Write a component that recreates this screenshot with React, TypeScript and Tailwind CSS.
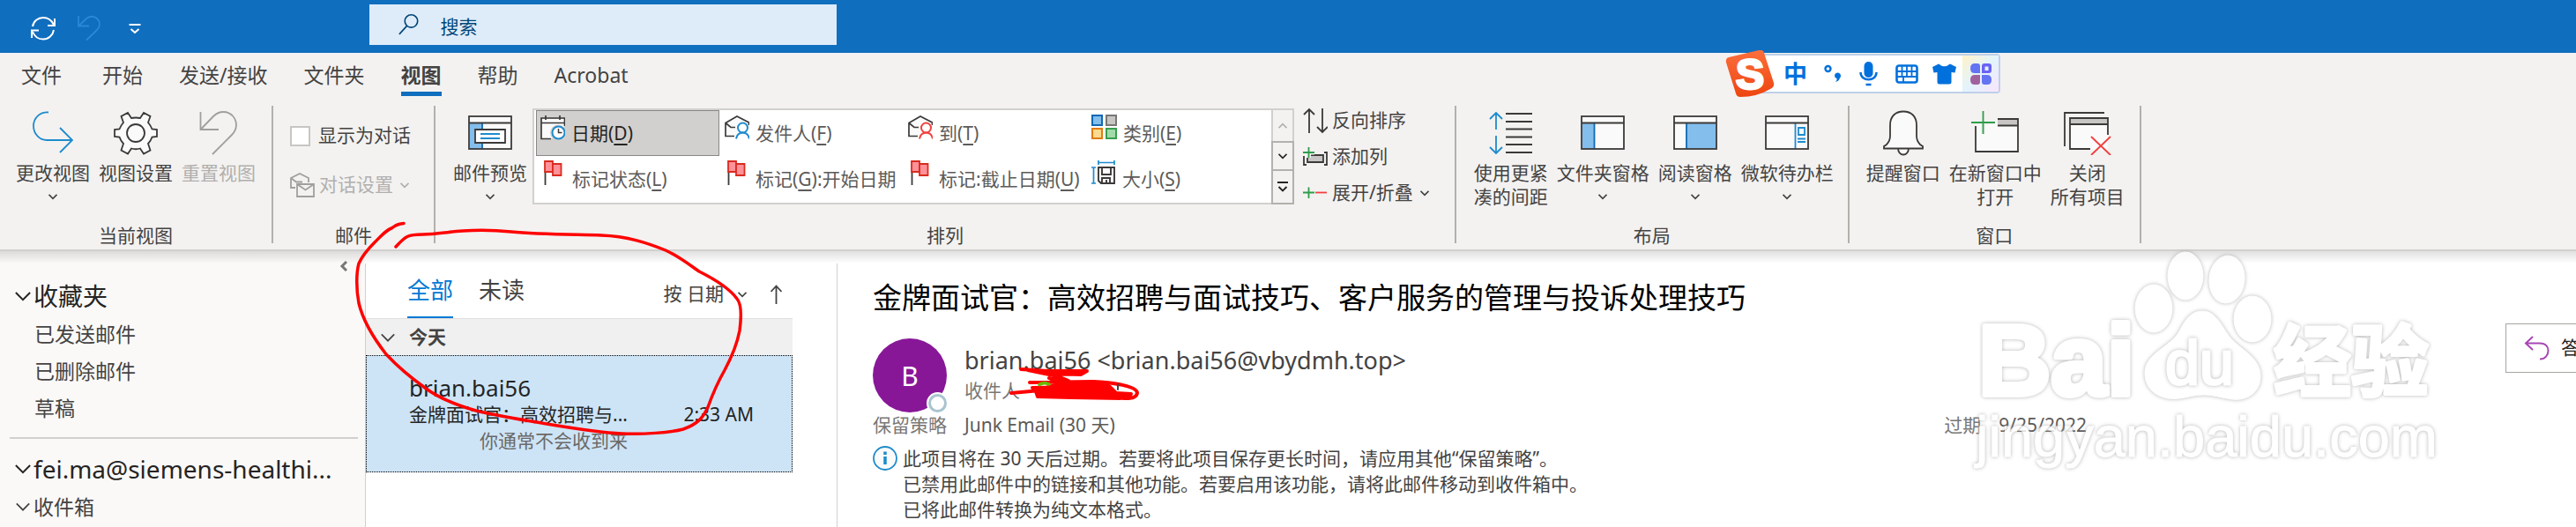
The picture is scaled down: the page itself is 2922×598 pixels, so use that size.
import { ReactNode, useState } from 'react'

const INK = '#3b3a39'
const BLUE = '#1e8bcd'

const TABS = ['文件', '开始', '发送/接收', '文件夹', '视图', '帮助', 'Acrobat']
const FAVORITES = ['已发送邮件', '已删除邮件', '草稿']

function Chevron({ size = 10, className = '' }: { size?: number; className?: string }) {
  return (
    <svg width={size} height={size} viewBox="0 0 10 10" fill="none" stroke="currentColor" className={`shrink-0 ${className}`}>
      <path d="M0.5 2.8 L5 7.3 L9.5 2.8" strokeWidth={size > 12 ? 1.1 : 1.7} />
    </svg>
  )
}

function WindowIcon({ children }: { children?: ReactNode }) {
  return (
    <svg width="50" height="40" viewBox="0 0 50 40" fill="none">
      <rect x="1" y="1" width="48" height="37" fill="#fafafa" />
      {children}
      <rect x="1" y="1" width="48" height="37" stroke={INK} strokeWidth="1.8" />
      <path d="M1 8.5 H49" stroke={INK} strokeWidth="1.8" />
    </svg>
  )
}

function FlagIcon() {
  return (
    <svg width="28" height="28" viewBox="0 0 28 28" fill="none">
      <path d="M4.5 13 V28" stroke={INK} strokeWidth="1.8" />
      <path d="M4 1 H13 V13 H4 Z" fill="#ff9198" stroke="#d92b20" strokeWidth="1.8" />
      <path d="M13 4 H22.5 V17 H13 Z" fill="#ff9198" stroke="#d92b20" strokeWidth="1.8" />
    </svg>
  )
}

function PersonMailIcon({ color }: { color: string }) {
  return (
    <svg width="28" height="28" viewBox="0 0 28 28" fill="none">
      <path d="M1 9 L14 2 L27 9 V24 H1 Z" fill="#fafafa" />
      <path d="M11 24.500 H1 V9.500 L14 2 L27.500 9 V12 M1 9.500 L7 14.500 H12" stroke={INK} strokeWidth="1.7" />
      <circle cx="20.500" cy="15" r="5.500" stroke={color} strokeWidth="2" fill="#fff" />
      <path d="M13 27.500 C14 22.500 17 20.500 20.500 20.500 S27 22.500 28 27.500" stroke={color} strokeWidth="2" />
    </svg>
  )
}

const GALLERY: { label: string; hotkey?: string; tail?: string; icon: ReactNode }[] = [
  {
    label: '日期', hotkey: 'D', icon: (
      <svg width="28" height="28" viewBox="0 0 28 28" fill="none">
        <path d="M1 4 H27 V26 H1 Z" fill="#fafafa" />
        <path d="M12 26.500 H1 V3 H27.500 V12 M1 8.500 H27.500 M6 0 V5 M22 0 V5" stroke={INK} strokeWidth="1.7" />
        <circle cx="20" cy="19.500" r="9" fill="#d2d0ce" />
        <circle cx="20.500" cy="19.500" r="7" fill="#fff" stroke={BLUE} strokeWidth="2" />
        <path d="M20.500 15 V19.500 H24.500" stroke={INK} strokeWidth="1.5" />
      </svg>
    ),
  },
  { label: '发件人', hotkey: 'F', icon: <PersonMailIcon color={BLUE} /> },
  { label: '到', hotkey: 'T', icon: <PersonMailIcon color="#f2403f" /> },
  {
    label: '类别', hotkey: 'E', icon: (
      <svg width="29" height="28" viewBox="0 0 29 28" strokeWidth="2">
        <rect x="1" y="1" width="11" height="11" fill="#83beec" stroke="#1068b4" />
        <rect x="17" y="1" width="11" height="11" fill="#c8c6c4" stroke="#797775" />
        <rect x="1" y="16" width="11" height="11" fill="#f9da8f" stroke="#e07b12" />
        <rect x="17" y="16" width="11" height="11" fill="#a1dba9" stroke="#379e4e" />
      </svg>
    ),
  },
  { label: '标记状态', hotkey: 'L', icon: <FlagIcon /> },
  { label: '标记', hotkey: 'G', tail: ':开始日期', icon: <FlagIcon /> },
  { label: '标记:截止日期', hotkey: 'U', icon: <FlagIcon /> },
  {
    label: '大小', hotkey: 'S', icon: (
      <svg width="28" height="28" viewBox="0 0 28 28" fill="none">
        <path d="M8 2.500 H26 M8 0 V5 M26 0 V5 M2.500 8 V26 M0 8 H5 M0 26 H5" stroke={BLUE} strokeWidth="1.7" />
        <path d="M8 8 H26 V26 H11 L8 23 Z M12 8 V16 H22 V8 M12 26 V20 H21 V26 M17 22 V25" stroke={INK} strokeWidth="1.9" />
      </svg>
    ),
  },
]

function RibbonGroup({ label, className, children }: { label: string; className: string; children: ReactNode }) {
  return (
    <section aria-label={label} className="flex h-[156px] shrink-0 flex-col justify-between border-r-2 border-[#b3b0ad]">
      <div className={`flex ${className}`}>{children}</div>
      <h2 className="text-center text-[21px] leading-[18px]">{label}</h2>
    </section>
  )
}

function BigButton({ lines, icon, menu, disabled }: { lines: string[]; icon: ReactNode; menu?: boolean; disabled?: boolean }) {
  return (
    <button type="button" disabled={disabled} className="flex flex-col items-center pt-[6px] text-[21px] leading-[27px] disabled:text-[#b1afad]">
      <span className="mb-[7px] flex h-[50px] items-center">{icon}</span>
      {lines.map((line) => <span key={line} className="whitespace-nowrap">{line}</span>)}
      {menu && <Chevron className="mt-2" />}
    </button>
  )
}

function TitleBar() {
  return (
    <header className="flex h-[60px] items-start bg-[#106ebe]">
      <div className="flex w-[419px] shrink-0 pt-[17px] pl-[34px]">
        <button type="button" aria-label="发送/接收所有文件夹" className="text-white">
          <svg width="30" height="30" viewBox="0 0 30 30" fill="none" stroke="currentColor" strokeWidth="2">
            <path d="M3 13 C4 7 9 3 15 3 C20.500 3 24.500 6 27 11 M28 4 V12 H20 M27 17 C26 23 21 27.500 15 27.500 C9.500 27.500 5 24 3 19 M2 26 V17.500 H10" />
          </svg>
        </button>
        <button type="button" aria-label="撤消" disabled className="ml-[23px] text-[#2b88d8]">
          <svg width="28" height="30" viewBox="0 0 28 30" fill="none" stroke="currentColor" strokeWidth="1.8">
            <path d="M2 1 V12.500 H14 M2 12.500 L11 4 C15 1 20 1 23 4 C27 8 27 13 23 17 L11 28.500" />
          </svg>
        </button>
        <button type="button" aria-label="自定义快速访问工具栏" className="ml-[31px] text-white">
          <svg width="14" height="26" viewBox="0 0 14 26" fill="none" stroke="currentColor" strokeWidth="2">
            <path d="M0.500 9 H13.500 M2.500 14 L7 18 L11.500 14" />
          </svg>
        </button>
      </div>
      <label className="mt-[5px] flex h-[46px] w-[530px] items-center bg-[#deecf9] pl-[33px] text-[#004578]">
        <svg width="26" height="28" viewBox="0 0 26 28" fill="none" stroke="currentColor" strokeWidth="1.8">
          <circle cx="16" cy="9.500" r="8" />
          <path d="M10.500 15.500 L1 26" />
        </svg>
        <input aria-label="搜索" placeholder="搜索" className="ml-6 w-full bg-transparent pt-[3px] text-[21px] leading-[28px] outline-none placeholder:text-[#004578]" />
      </label>
    </header>
  )
}

function Ribbon() {
  const [threaded, setThreaded] = useState(false)

  return (
    <div className="border-b-2 border-[#d2d0ce] bg-[#f3f2f1] pb-[7px] text-[#444342]">
      <nav className="mb-[11px] flex h-[49px] gap-[41px] pl-6 text-[23px]">
        {TABS.map((tab) => (
          <button
            key={tab}
            type="button"
            className={tab === '视图'
              ? 'border-b-[5px] border-[#106ebe] pt-[6px] leading-[38px] font-bold whitespace-nowrap'
              : 'pb-[5px] pt-[6px] leading-[38px] whitespace-nowrap first:mr-[5px]'}
          >
            {tab}
          </button>
        ))}
      </nav>

      <div className="flex">
        <RibbonGroup label="当前视图" className="gap-[10px] px-[18px]">
          <BigButton lines={['更改视图']} menu icon={
            <svg width="46" height="50" viewBox="0 0 46 50" fill="none" stroke={BLUE} strokeWidth="1.8">
              <path d="M18 1.500 C8 1 1 8 1 17 C1 26 8 33 16 33 H45 M31 19 L45 33 L31 47" />
            </svg>
          } />
          <BigButton lines={['视图设置']} icon={
            <svg width="50" height="50" viewBox="0 0 50 50" fill="#fafafa" stroke={INK} strokeWidth="1.8">
              <path d="M16 2 L20 8 Q25 7 30 8 L34 2 L41.500 6 L39 13 Q42 16.500 43.500 20.500 L49 21 V29 L43.500 29.500 Q42 34 39 37 L41.500 44.500 L34 48.500 L30 42.500 Q25 44 20 42.500 L16 48.500 L8.500 44.500 L11 37 Q8 34 6.500 29.500 L1 29 V21 L6.500 20.500 Q8 16.500 11 13 L8.500 6 Z" />
              <circle cx="25" cy="25" r="10" />
            </svg>
          } />
          <BigButton lines={['重置视图']} disabled icon={
            <svg width="44" height="50" viewBox="0 0 44 50" fill="none" stroke="#a19f9d" strokeWidth="1.8">
              <path d="M1.500 1 V21 H22 M1.500 21 L16 6 C23 -1 32 0 37.500 5 C44 12 43 21 37 27 L15 49" />
            </svg>
          } />
        </RibbonGroup>

        <RibbonGroup label="邮件" className="flex-col gap-5 pt-4 pr-[26px] pl-[19px] text-[21px] whitespace-nowrap">
          <label className="flex h-9 items-center gap-[9px]">
            <input
              type="checkbox"
              checked={threaded}
              onChange={(e) => setThreaded(e.target.checked)}
              className="size-[23px] appearance-none border-2 border-[#c8c6c4] bg-white checked:bg-[#106ebe]"
            />
            显示为对话
          </label>
          <button type="button" disabled className="flex h-9 items-center gap-[5px] text-[#b1afad]">
            <svg width="28" height="28" viewBox="0 0 28 28" fill="none" stroke="#a19f9d" strokeWidth="1.8">
              <path d="M6 17 H1 V6 L11 1 L21 6 V11 M1 6 L7 10.500 H14" />
              <path d="M8 13 H27 V27 H8 Z M8 13 L17.500 19.500 L27 13" fill="#f3f2f1" />
            </svg>
            对话设置
            <Chevron className="ml-[3px]" />
          </button>
        </RibbonGroup>

        <RibbonGroup label="排列" className="pr-[29px] pl-5">
          <BigButton lines={['邮件预览']} menu icon={
            <WindowIcon>
              <path d="M2 9 H16 V38 H2 Z" fill="#83beec" />
              <path d="M16 9 V38" stroke="#1068b4" strokeWidth="1.8" />
              <path d="M8 16 H42 V31 H8 Z" fill="#fff" stroke={INK} strokeWidth="1.8" />
              <path d="M14 21 H36 M14 26 H36" stroke={BLUE} strokeWidth="1.800" />
            </WindowIcon>
          } />
          <div className="mt-[3px] ml-[6px] grid h-[109px] grid-cols-[repeat(4,208px)] grid-rows-[52px_52px] border-2 border-r-0 border-[#d2d0ce] bg-white px-[2px] text-[21px] text-[#5d5b59]">
            {GALLERY.map((item, i) => (
              <button
                key={item.label}
                type="button"
                className={i === 0
                  ? 'flex items-center gap-[7px] border border-[#8a8886] bg-[#d2d0ce] pl-1 whitespace-nowrap text-[#252423]'
                  : 'flex items-center gap-[7px] pl-[6px] whitespace-nowrap'}
              >
                <span className="mt-[5px] shrink-0 self-start">{item.icon}</span>
                <span className="leading-[28px]">{item.label}(<u className="underline-offset-4">{item.hotkey}</u>){item.tail}</span>
              </button>
            ))}
          </div>
          <div className="mt-[3px] flex h-[109px] w-[26px] flex-col text-[#252423]">
            <button type="button" aria-label="上一行" className="flex h-[37px] items-center justify-center border-2 border-b-0 border-[#d2d0ce] text-[#b3b0ad]">
              <Chevron className="rotate-180" />
            </button>
            <button type="button" aria-label="下一行" className="flex h-[34px] items-center justify-center border-2 border-[#b3b0ad]">
              <Chevron />
            </button>
            <button type="button" aria-label="其他" className="flex h-[38px] items-center justify-center border-2 border-t-0 border-[#b3b0ad]">
              <svg width="12" height="14" viewBox="0 0 12 14" fill="none" stroke="currentColor" strokeWidth="1.900">
                <path d="M0 2 H12 M1.500 7 L6 11.500 L10.500 7" />
              </svg>
            </button>
          </div>
          <div className="ml-[10px] flex flex-col gap-[7px] text-[21px] whitespace-nowrap">
            <button type="button" className="flex h-[34px] items-center gap-[5px]">
              <svg width="28" height="30" viewBox="0 0 28 30" fill="none" stroke={INK} strokeWidth="1.800">
                <path d="M7 29 V2 M1 8 L7 2 L13 8 M22 1 V28 M16 22 L22 28 L28 22" />
              </svg>
              反向排序
            </button>
            <button type="button" className="flex h-[34px] items-center gap-[5px]">
              <svg width="28" height="22" viewBox="0 0 28 22" fill="none" stroke={INK} strokeWidth="1.800">
                <path d="M4 20 H1 V10 M24 6 H27 V20 H24" />
                <path d="M5 9 H23 V17 H5 Z" fill="#c8c6c4" />
                <path d="M6.500 0 V12 M0 6 H13" stroke="#f3f2f1" strokeWidth="5" />
                <path d="M6.500 0 V12 M0 6 H13" stroke="#2f9d4b" />
              </svg>
              添加列
            </button>
            <button type="button" className="flex h-[34px] items-center gap-[5px]">
              <svg width="28" height="14" viewBox="0 0 28 14" fill="none" strokeWidth="1.800">
                <path d="M6.500 0.500 V13 M0 6.500 H13" stroke="#2f9d4b" />
                <path d="M14 6.500 H27" stroke="#f2403f" />
              </svg>
              展开/折叠
              <Chevron className="ml-[3px]" />
            </button>
          </div>
        </RibbonGroup>

        <RibbonGroup label="布局" className="gap-[10px] pr-4 pl-5">
          <BigButton lines={['使用更紧', '凑的间距']} icon={
            <svg width="50" height="50" viewBox="0 0 50 50" fill="none" strokeWidth="1.800">
              <path d="M8 21 V2 M1 9 L8 2 L15 9 M8 28 V48 M1 41 L8 48 L15 41" stroke={BLUE} />
              <path d="M19 3 H49 M19 12 H49 M19 20.500 H49 M19 29.500 H49 M19 38 H49 M19 47 H49" stroke={INK} />
            </svg>
          } />
          <BigButton lines={['文件夹窗格']} menu icon={
            <WindowIcon>
              <path d="M2 9 H15 V38 H2 Z" fill="#83beec" />
              <path d="M15.500 9 V38" stroke="#1068b4" strokeWidth="1.800" />
            </WindowIcon>
          } />
          <BigButton lines={['阅读窗格']} menu icon={
            <WindowIcon>
              <path d="M15 9 H49 V38 H15 Z" fill="#83beec" />
              <path d="M15 9 V38" stroke="#1068b4" strokeWidth="1.800" />
            </WindowIcon>
          } />
          <BigButton lines={['微软待办栏']} menu icon={
            <WindowIcon>
              <path d="M34.500 9 V38 M38 14 H45 V22 H38 Z M37 26.500 H46 M37 30 H46" stroke={BLUE} strokeWidth="1.800" />
            </WindowIcon>
          } />
        </RibbonGroup>

        <RibbonGroup label="窗口" className="gap-[10px] pr-[17px] pl-[19px]">
          <BigButton lines={['提醒窗口']} icon={
            <svg width="46" height="52" viewBox="0 0 46 52" fill="#fafafa" stroke={INK} strokeWidth="1.800">
              <path d="M17 43 C17 53 29 53 29 43" />
              <path d="M1 43.500 V41 L4 39 Q8 35 8 29 V17 C8 7 14 1.500 23 1.500 S38 7 38 17 V29 Q38 35 42 39 L45 41 V43.500 Z" />
            </svg>
          } />
          <BigButton lines={['在新窗口中', '打开']} icon={
            <svg width="54" height="50" viewBox="0 0 54 50" fill="none" strokeWidth="1.800">
              <path d="M5 12 H53 V46 H5 Z" fill="#fafafa" />
              <path d="M30 9 H53 V16 H30 Z" fill="#c8c6c4" />
              <path d="M5 17 V46 H53 V9 H30 M30 16.500 H53" stroke={INK} />
              <path d="M13.500 0 V26 M0 13 H27" stroke="#f3f2f1" strokeWidth="5" />
              <path d="M13.500 0 V26 M0 13 H27" stroke="#2f9d4b" />
            </svg>
          } />
          <BigButton lines={['关闭', '所有项目']} icon={
            <svg width="54" height="50" viewBox="0 0 54 50" fill="none" strokeWidth="1.800">
              <path d="M7 8 H50 V44 H7 Z" fill="#fafafa" />
              <path d="M7 8 H50 V15 H7 Z" fill="#c8c6c4" />
              <path d="M1 40 V2 H46 M30 43 H7 V8 H50 V27 M7 15 H50" stroke={INK} />
              <path d="M31 29 L53 50 M53 29 L31 50" stroke="#f2403f" strokeWidth="1.900" />
            </svg>
          } />
        </RibbonGroup>
      </div>
    </div>
  )
}

// Floating input method bar
function ImeBar() {
  return (
    <div className="absolute top-[57px] left-[1957px] flex items-center text-[#0070dc]">
      <svg width="56" height="54" viewBox="0 0 56 54" className="relative z-10 -mr-[28px]">
        <defs>
          <linearGradient id="sogou" x1="0" y1="0" x2="0" y2="1">
            <stop offset="0" stopColor="#fb6f3c" />
            <stop offset="1" stopColor="#ee4510" />
          </linearGradient>
        </defs>
        <path d="M4 8 L38 0 Q43 -1 44 3 L55 37 Q56 42 51 44 Q36 53 17 53 Q13 53 12 49 L1 14 Q0 9 4 8 Z" fill="url(#sogou)" />
        <text x="28" y="44" textAnchor="middle" fontSize="48" fontWeight="700" fontFamily="Liberation Sans, sans-serif" fill="#fff" stroke="#fff" strokeWidth="3">S</text>
      </svg>
      <div className="mb-px flex h-[45px] items-center rounded-r-[4px] border-2 border-[#bfd0e8] bg-white pl-[36px]">
        <button type="button" className="text-[27px] leading-[36px] font-bold">中</button>
        <button type="button" aria-label="中文标点" className="ml-[19px]">
          <svg width="20" height="24" viewBox="0 0 20 24" fill="none">
            <circle cx="4.500" cy="6" r="3" stroke="currentColor" strokeWidth="2.400" />
            <path d="M12 14 a3.500 3.500 0 1 1 6 2.500 Q17 20 13 21 Q15 19 14.500 17 Q12 16.500 12 14 Z" fill="currentColor" />
          </svg>
        </button>
        <button type="button" aria-label="语音" className="ml-5">
          <svg width="21" height="28" viewBox="0 0 21 28" fill="none" stroke="currentColor" strokeWidth="2.500">
            <rect x="5.500" y="0" width="10" height="18" rx="5" fill="currentColor" stroke="none" />
            <path d="M1.500 12 C1.500 23 19.500 23 19.500 12 M7.500 26 H13.500" />
          </svg>
        </button>
        <button type="button" aria-label="输入方式" className="ml-5">
          <svg width="26" height="22" viewBox="0 0 26 22" fill="none" stroke="currentColor" strokeWidth="1.800">
            <rect x="1.500" y="1.500" width="23" height="19" rx="2.500" strokeWidth="2.600" />
            <path d="M2 8 H24 M2 14 H24 M7.500 2 V14 M13 2 V14 M18.500 2 V14 M9 14 V20" />
          </svg>
        </button>
        <button type="button" aria-label="皮肤" className="ml-4">
          <svg width="27" height="24" viewBox="0 0 27 24" fill="currentColor">
            <path d="M7 0.500 Q13.500 6 20 0.500 L27 4 L25.500 10.500 L21.500 10 V21 Q21.500 23.500 19 23.500 H8 Q5.500 23.500 5.500 21 V10 L1.500 10.500 L0 4 Z" />
          </svg>
        </button>
        <button type="button" aria-label="工具箱" className="ml-[7px] flex h-full w-[41px] items-center justify-center bg-linear-to-br from-[#fff3c8] via-[#e2f4fd] to-[#f8e4fb]">
          <svg width="24" height="24" viewBox="0 0 24 24" fill="#6373f2">
            <path d="M5 0 H8 Q11 0 11 3 V11 H5 Q0 11 0 5.500 Q0 0 5 0 Z" />
            <path d="M16 0 H21 Q24 0 24 3 V8 Q24 11 21 11 H13 V3 Q13 0 16 0 Z M16.500 3.500 V8 H20.500 V3.500 Z" fillRule="evenodd" fill="#6a63f5" />
            <path d="M5 13 H11 V21 Q11 24 8 24 H5 Q0 24 0 18.500 Q0 13 5 13 Z" fill="#a0619d" />
            <path d="M13 13 H19 Q24 13 24 18.500 Q24 24 19 24 H16 Q13 24 13 21 Z" />
          </svg>
        </button>
      </div>
    </div>
  )
}

function FolderPane() {
  return (
    <aside className="w-[414px] shrink-0 bg-[#faf9f8] text-[#444342]">
      <div className="flex h-[29px] items-center justify-end pt-1 pr-5">
        <button type="button" aria-label="折叠文件夹窗格">
          <svg width="9" height="12" viewBox="0 0 9 12" fill="none" stroke="#797775" strokeWidth="3">
            <path d="M8 1 L3 6 L8 11" />
          </svg>
        </button>
      </div>
      <button type="button" className="flex h-11 items-center gap-[3px] pl-[17px] text-[28px] text-[#252423]">
        <Chevron size={18} />收藏夹
      </button>
      <ul className="pl-[39px] text-[23px] leading-[42px]">
        {FAVORITES.map((name) => <li key={name}><a href="#">{name}</a></li>)}
      </ul>
      <hr className="mt-3 mr-2 ml-[11px] border-t-2 border-[#d2d0ce]" />
      <button type="button" className="mt-3 flex h-11 items-center gap-[3px] pl-[17px] text-[28px] text-[#252423]">
        <Chevron size={18} />fei.ma@siemens-healthi...
      </button>
      <button type="button" className="flex h-[42px] items-center gap-[4px] pl-[18px] text-[23px]">
        <Chevron size={16} />收件箱
      </button>
    </aside>
  )
}

function MessageList() {
  return (
    <section className="w-[534px] shrink-0 pr-[50px]">
      <div className="flex h-[76px] items-end pr-3 pl-[47px] text-[#444342]">
        <button type="button" className="h-[62px] border-b-2 border-[#0078d4] text-[26px] text-[#0078d4]">全部</button>
        <button type="button" className="ml-[29px] h-[62px] pb-[2px] text-[26px]">未读</button>
        <button type="button" className="ml-auto flex h-[54px] items-center text-[21px]">
          按 日期 <Chevron className="ml-4" />
        </button>
        <button type="button" aria-label="升序" className="ml-[27px] flex h-[54px] items-center">
          <svg width="13" height="22" viewBox="0 0 13 22" fill="none" stroke="currentColor" strokeWidth="1.800">
            <path d="M6.500 22 V1.500 M0.500 8 L6.500 1.500 L12.500 8" />
          </svg>
        </button>
      </div>
      <button type="button" className="flex h-[42px] w-full items-center gap-4 border-t border-[#e1dfdd] bg-[#f0f0f0] pl-[17px] text-[21px] font-bold text-[#444342]">
        <Chevron size={16} />今天
      </button>
      <article className="h-[133px] border border-dotted border-black bg-[#cde4f7] pt-[21px] pr-[43px] pl-12 text-[21px] leading-[30px] text-[#252423]">
        <h3 className="text-[26px]">brian.bai56</h3>
        <div className="flex justify-between whitespace-nowrap">
          <p>金牌面试官：高效招聘与...</p>
          <time>2:33 AM</time>
        </div>
        <p className="pl-20 text-[#6b6967]">你通常不会收到来</p>
      </article>
    </section>
  )
}

function ReadingPane() {
  return (
    <main className="min-w-0 flex-1 pt-[33px] pl-10 text-[21px] text-[#444342]">
      <h1 className="text-[33px] leading-[40px] text-black">金牌面试官：高效招聘与面试技巧、客户服务的管理与投诉处理技巧</h1>
      <div className="mt-[26px] flex h-[84px]">
        <div className="relative flex size-[84px] items-center justify-center rounded-full bg-[#881798] text-[30px] text-white">
          B
          <span className="absolute -right-[2px] -bottom-[2px] size-[25px] rounded-full border-2 border-white bg-white">
            <span className="block size-[21px] rounded-full border-3 border-[#a9c4cf]" />
          </span>
        </div>
        <div className="ml-5 pt-2 leading-[34px]">
          <p className="text-[27px]">brian.bai56 &lt;brian.bai56@vbydmh.top&gt;</p>
          <p className="text-[#797775]">收件人</p>
        </div>
        <button type="button" className="-mt-[17px] ml-auto flex h-14 w-20 items-center gap-[13px] overflow-hidden border border-r-0 border-[#a6a4a2] pl-5 text-[#252423]">
          <svg width="29" height="28" viewBox="0 0 29 28" fill="none" stroke="#a846b4" strokeWidth="2" className="shrink-0">
            <path d="M10 1 L2 8.500 L10 16 M2 8.500 H18 C25 8.500 27.500 13 27.500 17 C27.500 22 24 26.500 18 26.500" />
          </svg>
          答
        </button>
      </div>
      <div className="mr-[555px] flex leading-[28px] text-[#797775]">
        <span>保留策略</span>
        <span className="ml-5 text-[#5d5b59]">Junk Email (30 天)</span>
        <span className="ml-auto">过期</span>
        <time className="ml-5 text-[#5d5b59]">9/25/2022</time>
      </div>
      <div className="mt-[10px] flex gap-[6px] leading-[29px]">
        <svg width="28" height="28" viewBox="0 0 28 28" fill="none" stroke={BLUE} className="shrink-0">
          <circle cx="14" cy="14" r="13" fill="#fafafa" strokeWidth="1.800" />
          <path d="M14 12 V21 M14 6.500 V10" strokeWidth="3.500" />
        </svg>
        <div>
          <p>此项目将在 30 天后过期。若要将此项目保存更长时间，请应用其他“保留策略”。</p>
          <p>已禁用此邮件中的链接和其他功能。若要启用该功能，请将此邮件移动到收件箱中。</p>
          <p>已将此邮件转换为纯文本格式。</p>
        </div>
      </div>
    </main>
  )
}

// Soft grey rim round white shapes
const RIM = 'drop-shadow-[0_0_2px_#a3a3a3]'

function Watermark() {
  return (
    <svg width="540" height="260" viewBox="0 0 540 260" className="pointer-events-none absolute top-[280px] left-[2235px] opacity-80" fill="#fff" stroke="#fff" strokeLinejoin="round">
      <g fontFamily="Liberation Sans, sans-serif">
        <text x="9" y="168" fontSize="114" fontWeight="700" strokeWidth="6" className={RIM}>Bai</text>
        <g className={RIM}>
          <ellipse cx="208" cy="70" rx="21" ry="27" />
          <ellipse cx="244" cy="33" rx="20" ry="27" />
          <ellipse cx="291" cy="37" rx="20" ry="27" transform="rotate(6 291 37)" />
          <ellipse cx="320" cy="82" rx="21" ry="26" />
          <path d="M263 73 C276 73 282 84 291 98 C302 116 329 123 329 147 C329 167 312 175 297 173 C283 171 276 168 264 168 C250 168 240 174 224 172 C207 169 198 158 198 143 C198 121 227 114 237 96 C244 82 251 73 263 73 Z" />
        </g>
        <text x="221" y="156" fontSize="70" strokeWidth="3" className={RIM}>du</text>
        <text x="6" y="238" fontSize="65" strokeWidth="1" className={RIM}>jingyan.baidu.com</text>
      </g>
      <text x="344" y="162" fontSize="88" fontWeight="700" strokeWidth="4" fontFamily="Noto Sans CJK SC, sans-serif" className={RIM}>经验</text>
    </svg>
  )
}

// Red pen strokes drawn over the window
function PenMarks() {
  return (
    <svg width="1300" height="598" viewBox="0 0 1300 598" className="pointer-events-none absolute top-0 left-0" fill="none" stroke="#f00" strokeWidth="3.500" strokeLinecap="round" strokeLinejoin="round">
      <path d="M458 253.500 C452 254 448 256 445 258.500 C438 261 434 266 425 275 C417 283 411 290 407 299 C404 310 404 328 407 344 C412 365 424 384 438 402 C453 418 468 430 482 440 C498 452 515 459 540 466 C565 472 590 476 620 481 C650 486 680 491 705 492 C730 493 760 491 775 487 C792 481 798 473 803 462 C808 448 814 434 822 420 C830 405 836 391 839 375 C841 360 841 345 836 339 C828 328 815 319 793 308 C780 299 770 291 755 284 C735 276 712 268 682 267 C650 266 610 266 580 263 C560 261 540 261 525 262 C508 263 495 266 480 266 C462 266 460 268 449 280" />
      <g strokeWidth="4">
        <path d="M1158 419 L1188 421 L1233 421 L1226 425 L1195 424 L1166 420 L1200 427 L1212 432 L1192 430 L1203 425" />
        <path d="M1168 434 L1240 433 C1262 434 1290 438 1290 446 C1289 452 1282 452 1276 452 M1147 446 L1180 443 M1171 440 L1230 439 M1190 429 L1215 434" />
        <path d="M1180 442 L1200 436 L1230 434 L1258 438 L1266 446 L1283 447 L1280 452 L1215 451 L1177 450 L1175 444 Z" fill="#f00" />
      </g>
      <path d="M1179 436.500 Q1184 433 1190 436" stroke="#6bb700" />
      <path d="M1268 436 V442" stroke="#444342" strokeWidth="2" />
    </svg>
  )
}

export default function App() {
  return (
    <div className="relative flex min-h-screen flex-col overflow-hidden bg-white font-['Noto_Sans','Noto_Sans_CJK_SC',sans-serif]">
      <TitleBar />
      <Ribbon />
      <div className="relative flex flex-1">
        <FolderPane />
        <div className="mt-[14px] w-px shrink-0 bg-[#d2d0ce]" />
        <MessageList />
        <div className="mt-[14px] w-px shrink-0 bg-[#d2d0ce]" />
        <ReadingPane />
        <div className="pointer-events-none absolute inset-x-0 top-0 h-[14px] bg-linear-to-b from-black/12 to-transparent" />
      </div>
      <ImeBar />
      <Watermark />
      <PenMarks />
    </div>
  )
}
